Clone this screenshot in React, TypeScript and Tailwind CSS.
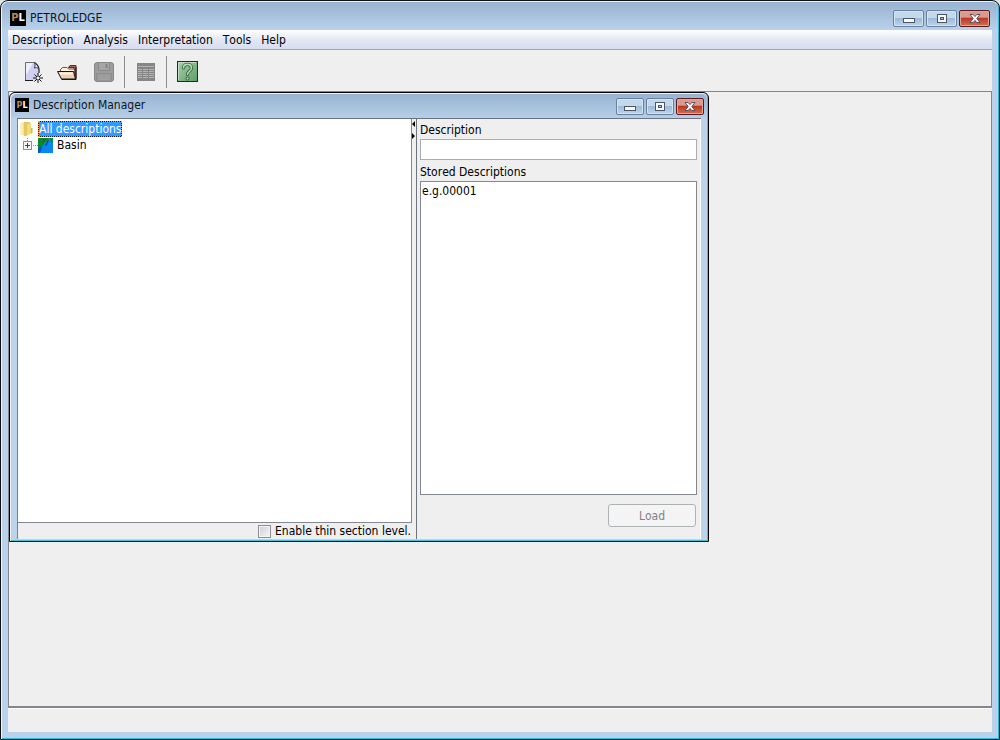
import { useState } from 'react';

const FONT = "font-['DejaVu_Sans_Condensed','DejaVu_Sans',sans-serif] font-stretch-condensed [font-kerning:none]";

function Logo({ small = false }: { small?: boolean }) {
  return (
    <span
      aria-hidden="true"
      className={
        small
          ? "flex h-[14px] w-[14px] shrink-0 items-center justify-center bg-black text-[9px] leading-none font-bold text-[#b08d5c]"
          : "flex h-4 w-4 shrink-0 items-center justify-center bg-black text-[11px] leading-none font-bold text-[#b08d5c]"
      }
    >
      P<span className="text-white">L</span>
    </span>
  );
}

const CAPTION =
  'flex items-center justify-center rounded-[2px] border border-[#68819f] bg-linear-to-b from-[#c4d8ec] from-45% via-[#9fbad8] via-50% to-[#bdd3ea] shadow-[inset_0_0_0_1px_#d5e4f3]';
const CAPTION_CLOSE =
  'flex items-center justify-center rounded-[2px] border border-[#5a1a1c] bg-linear-to-b from-[#dc9a8e] from-40% via-[#b93a26] via-50% to-[#d46e52] shadow-[inset_0_0_0_1px_#e2a79b]';

function CaptionButtons({ small = false }: { small?: boolean }) {
  const size = small ? ' h-[17px] w-7' : ' h-[17px] w-[31px]';
  return (
    <div className="flex gap-[2px]">
      <button type="button" aria-label="Minimize" className={CAPTION + size}>
        <svg width="12" height="11" viewBox="0 0 12 11" shapeRendering="crispEdges">
          <rect x="0.5" y="5.5" width="11" height="4" rx="1" fill="#f8f8f8" stroke="#4b5668" />
        </svg>
      </button>
      <button type="button" aria-label="Maximize" className={CAPTION + size}>
        <svg width="12" height="11" viewBox="0 0 12 11" shapeRendering="crispEdges">
          <rect x="1.5" y="1.5" width="9" height="8" fill="#f8f8f8" stroke="#4b5668" />
          <rect x="4.5" y="4.5" width="3" height="2" fill="#a9bfd8" stroke="#4b5668" />
        </svg>
      </button>
      <button type="button" aria-label="Close" className={CAPTION_CLOSE + size}>
        <svg width="12" height="11" viewBox="0 0 12 11">
          <path
            d="M1 1.5h3.2L6 3.6 7.8 1.5H11L7.8 5.5 11 9.5H7.8L6 7.4 4.2 9.5H1l3.2-4z"
            fill="#fafafa"
            stroke="#57525f"
          />
        </svg>
      </button>
    </div>
  );
}

function NewIcon() {
  return (
    <svg width="20" height="22" viewBox="0 0 20 22">
      <path d="M1.5 1.5h9l4 5v13h-13z" fill="#cfcff2" />
      <path d="M2 2h7L3 13H2z" fill="#eeeefc" />
      <path d="M1.5 20V1.500h9" fill="none" stroke="#6c6c74" />
      <path d="M10.500 1.500c3 2 4.500 4.500 4.500 7.500v3M1 19.500h8" fill="none" stroke="#1c1c1c" strokeWidth="1.200" />
      <path d="M10.500 1.500c.8 2 .8 3.500 0 5.500 1.500-.6 3-.4 4.300.8" fill="#f4f4ff" stroke="#333" />
      <path d="M14 12v10M9 17h10M10.500 13.500l7 7M17.500 13.500l-7 7" stroke="#111" />
      <rect x="13" y="16" width="2" height="2" fill="#fff" />
    </svg>
  );
}

function OpenIcon() {
  return (
    <svg width="22" height="18" viewBox="0 0 22 18">
      <path d="M12.500 4.500l1.500-2h6v13h-2V4.500z" fill="#a9635c" stroke="#5c2c28" />
      <path d="M4.500 8V6.500l2-2H11l1.500 1.500h6V14" fill="#fdf3e2" stroke="#6b5040" />
      <path d="M1.500 8.500h16l2 7.500H5.500z" fill="#ecd0b0" stroke="#151515" />
      <path d="M3.500 9.500h13l.5 2H4.500z" fill="#fff3e0" />
      <path d="M20 4v12.500H5.500" fill="none" stroke="#151515" />
    </svg>
  );
}

function SaveIcon() {
  return (
    <svg width="22" height="22" viewBox="0 0 22 22">
      <rect x="1.500" y="1.500" width="19" height="19" rx="2.500" fill="#9c9c9c" stroke="#878787" />
      <path d="M5.500 2v7.500h11V2" fill="#a6a6a6" stroke="#8a8a8a" />
      <path d="M13.500 3v4" stroke="#828282" strokeWidth="2" />
      <path d="M3.500 20v-7.500h15V20" fill="#989898" stroke="#8c8c8c" />
      <path d="M5 14.500h12M5 16.500h12M5 18.500h12" stroke="#a3a3a3" />
    </svg>
  );
}

function TableIcon() {
  return (
    <svg width="20" height="20" viewBox="0 0 20 20" shapeRendering="crispEdges">
      <rect x="1" y="1" width="18" height="18" fill="#868686" />
      <path
        d="M2 4.500h16M2 7.500h4M7 7.500h5M13 7.500h5M2 9.500h4M7 9.500h5M13 9.500h5M2 11.500h4M7 11.500h5M13 11.500h5M2 13.500h4M7 13.500h5M13 13.500h5M2 15.500h4M7 15.500h5M13 15.500h5"
        stroke="#b4b4b4"
      />
    </svg>
  );
}

function HelpIcon() {
  return (
    <svg width="22" height="22" viewBox="0 0 22 22">
      <defs>
        <linearGradient id="helpFill" x1="0" y1="0" x2="1" y2="1">
          <stop offset="0" stopColor="#a9cfae" />
          <stop offset="1" stopColor="#5f9c67" />
        </linearGradient>
      </defs>
      <rect x="0.500" y="0.500" width="20" height="20" fill="url(#helpFill)" stroke="#14331a" />
      <path d="M1.500 19V1.500H19" fill="none" stroke="#c3e0c6" />
      <path
        d="M6.500 7C6.500 2.200 14.500 2.200 14.500 7c0 3-4 3.200-4 6.500"
        fill="none"
        stroke="#2f5f38"
        strokeWidth="3.200"
        strokeLinecap="round"
      />
      <path
        d="M6.500 7C6.500 2.200 14.500 2.200 14.500 7c0 3-4 3.200-4 6.500"
        fill="none"
        stroke="#b4dab7"
        strokeWidth="1.600"
        strokeLinecap="round"
      />
      <circle cx="10.500" cy="17.500" r="1.500" fill="#b4dab7" stroke="#2f5f38" />
    </svg>
  );
}

function FolderIcon() {
  return (
    <svg width="14" height="16" viewBox="0 0 14 16">
      <path d="M1 2l6-1v14l-6-2z" fill="#f3e28c" />
      <path d="M5 1h6v11l-4 3H5z" fill="#e4c85c" />
      <path d="M1 2h3v12l-3-1z" fill="#faf0b8" />
      <path d="M8 3l4-1v10l-4 3z" fill="#f0da7c" />
      <path d="M12 7h1.500v5l-2 1z" fill="#d8b94c" />
    </svg>
  );
}

function BasinIcon() {
  return (
    <svg width="15" height="15" viewBox="0 0 15 15">
      <rect width="15" height="15" fill="#0a86f0" />
      <path d="M0 0h12L9 3 7 4 5 8 3 9 1 13H0z" fill="#0a8a2c" />
      <path d="M5 1h3L6 4 4 6z" fill="#0e6f30" />
      <path d="M12 0h3v5l-3-2z" fill="#0b8a4a" />
      <path d="M9 3l2-1-2 5-2 1z" fill="#0a3f9c" />
      <path d="M0 11l3-3 1 2-2 5H0z" fill="#0b56b8" />
    </svg>
  );
}

const MENUS = ['Description', 'Analysis', 'Interpretation', 'Tools', 'Help'];

function DescriptionManager() {
  const [thin, setThin] = useState(false);
  const [name, setName] = useState('');
  return (
    <section
      aria-label="Description Manager"
      className="absolute top-0 left-0 flex h-[450px] w-[700px] flex-col rounded-t-md border border-black bg-[#bdd3ea] shadow-[inset_1px_1px_0_#e8f2fb,inset_-1px_-1px_0_#30c8e8]"
    >
      <header className="mx-px mt-px flex h-6 shrink-0 items-center gap-1 rounded-t-md bg-linear-to-b from-[#98b3d2] to-[#b6cfe8] pr-[3px] pb-[2px] pl-1">
        <Logo small />
        <h2 className="flex-1 text-[12px] leading-4 text-[#0c1420]">Description Manager</h2>
        <div className="pt-[3px]">
          <CaptionButtons small />
        </div>
      </header>
      <div className="mr-[7px] mb-[2px] ml-[7px] flex min-h-0 flex-1 border-t border-[#6d7480] bg-[#efefef]">
        <div className="flex w-[395px] shrink-0 flex-col border-l border-[#7a828c]">
          <ul role="tree" className="flex-1 border-r border-b border-[#828790] bg-white pt-px">
            <li role="treeitem" aria-expanded="true" aria-selected="true">
              <div className="flex h-[17px] items-center gap-[5px] pl-px">
                <FolderIcon />
                <span className="border border-dotted border-[#ff9a30] bg-[#101820] text-[12px] leading-[14px] text-white">
                  <span className="block bg-[#3399ff]">All descriptions</span>
                </span>
              </div>
              <ul role="group">
                <li role="treeitem" aria-expanded="false" aria-selected="false" className="flex h-4 items-center pl-[5px]">
                  <button type="button" aria-label="Expand Basin">
                    <svg width="15" height="15" viewBox="0 0 15 15" shapeRendering="crispEdges" className="block">
                      <path d="M4.500 0v3M10 7.500h5" stroke="#909090" strokeDasharray="1 1" />
                      <rect x="0.500" y="3.500" width="8" height="8" fill="#f6f6f6" stroke="#919191" />
                      <path d="M2 7.500h5M4.500 5v5" stroke="#2f3f80" />
                    </svg>
                  </button>
                  <BasinIcon />
                  <span className="pl-1 text-[12px] leading-4">Basin</span>
                </li>
              </ul>
            </li>
          </ul>
          <label className="flex h-4 items-center justify-end gap-1 pr-px text-[12px] leading-4">
            <input
              type="checkbox"
              checked={thin}
              onChange={(e) => setThin(e.target.checked)}
              className="h-[13px] w-[13px] appearance-none border border-[#8e8f8f] bg-linear-to-br from-[#cbcfd5] to-[#f7f7f7] shadow-[inset_0_0_0_1px_#f4f4f4] checked:bg-[#3399ff]"
            />
            Enable thin section level.
          </label>
        </div>
        <div className="flex w-[5px] shrink-0 justify-end border-r border-[#6d7480] pt-[2px] pr-px">
          <svg width="3" height="18" viewBox="0 0 3 18" aria-hidden="true">
            <path d="M3 0v6L0 3zM0 12v6l3-3z" fill="#000" />
          </svg>
        </div>
        <div className="flex min-w-0 flex-1 flex-col border-r border-white pr-[3px] pb-3 pl-[3px]">
          <label htmlFor="desc" className="pt-[2px] text-[12px] leading-[18px]">
            Description
          </label>
          <input
            id="desc"
            value={name}
            onChange={(e) => setName(e.target.value)}
            className="h-[21px] border border-[#abadb3] bg-white px-1 text-[12px] outline-none"
          />
          <h3 id="stored" className="pt-[3px] text-[12px] leading-[18px]">
            Stored Descriptions
          </h3>
          <ul role="listbox" aria-labelledby="stored" className="flex-1 border border-[#828790] bg-white px-px py-px text-[12px] leading-4">
            <li role="option" aria-selected="false">
              e.g.00001
            </li>
          </ul>
          <button
            type="button"
            disabled
            className="mt-[9px] mr-px h-[23px] w-[88px] self-end rounded-[3px] border border-[#adb2b5] bg-[#f4f4f4] text-[12px] text-[#838383]"
          >
            Load
          </button>
        </div>
      </div>
    </section>
  );
}

export default function App() {
  return (
    <div className={`flex min-h-screen flex-col bg-[#dfe6ea] text-black ${FONT}`}>
      <div className="flex flex-1 flex-col rounded-t-lg border border-[#101010] bg-[#b9d1ea] px-[7px] pb-[7px] shadow-[inset_1px_1px_0_#eef5fb,inset_-1px_-1px_0_#15c5ee]">
        <header className="-mx-[6px] mt-px flex h-7 items-center gap-1 rounded-t-md bg-linear-to-b from-[#98b3d2] to-[#b9d1ea] px-2">
          <div className="flex flex-1 items-center gap-1 pt-[3px]">
            <Logo />
            <h1 className="text-[12px] leading-4 text-[#0c1420]">PETROLEDGE</h1>
          </div>
          <div className="pt-[5px]">
            <CaptionButtons />
          </div>
        </header>
        <nav className="flex h-5 items-center gap-[10px] border-b border-[#a0a4b0] bg-linear-to-b from-white via-[#e4e8f4] to-[#d8ddf0] px-1">
          {MENUS.map((m) => (
            <button key={m} type="button" className="text-[12px] leading-4">
              {m}
            </button>
          ))}
        </nav>
        <div role="toolbar" aria-label="Main" className="flex h-[41px] items-center bg-[#efefef] pt-[2px] pl-4">
          <button type="button" aria-label="New">
            <NewIcon />
          </button>
          <button type="button" aria-label="Open" className="ml-3">
            <OpenIcon />
          </button>
          <button type="button" aria-label="Save" disabled className="ml-[15px]">
            <SaveIcon />
          </button>
          <span className="ml-[9px] h-8 w-px bg-[#8c8c8c]" />
          <button type="button" aria-label="Table" disabled className="ml-[11px]">
            <TableIcon />
          </button>
          <span className="ml-[10px] h-8 w-px bg-[#8c8c8c]" />
          <button type="button" aria-label="Help" className="ml-[10px]">
            <HelpIcon />
          </button>
        </div>
        <main className="relative flex-1 border border-b-2 border-[#84868c] bg-[#efefef]">
          <DescriptionManager />
        </main>
        <footer className="h-6 border-t border-white bg-[#efefef]" />
      </div>
    </div>
  );
}
